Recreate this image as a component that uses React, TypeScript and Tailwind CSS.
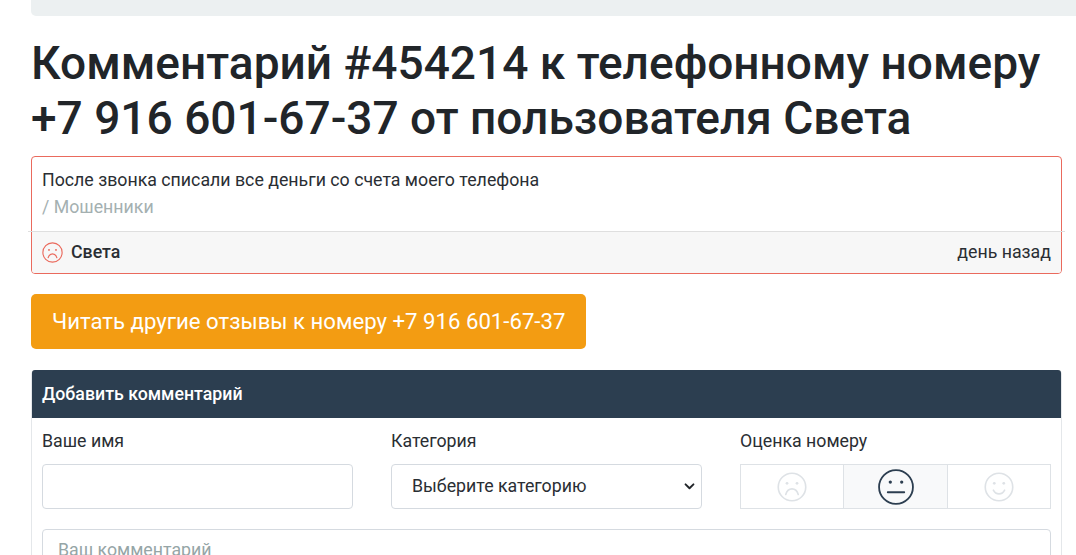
const Frown = ({ className }: { className: string }) => (
  <svg viewBox="0 0 24 24" fill="none" stroke="currentColor" strokeWidth="1.3" strokeLinecap="round" className={className}>
    <circle cx="12" cy="12" r="11" />
    <circle cx="8" cy="9" r="1.1" fill="currentColor" stroke="none" />
    <circle cx="16" cy="9" r="1.1" fill="currentColor" stroke="none" />
    <path d="M7 18c.8-2.800 2.800-4.500 5-4.500s4.200 1.700 5 4.500" />
  </svg>
);

const Meh = ({ className }: { className: string }) => (
  <svg viewBox="0 0 24 24" fill="none" stroke="currentColor" strokeWidth="1.200" strokeLinecap="round" className={className}>
    <circle cx="12" cy="12" r="11.300" />
    <circle cx="8.200" cy="8.700" r="1.100" fill="currentColor" stroke="none" />
    <circle cx="15.800" cy="8.700" r="1.100" fill="currentColor" stroke="none" />
    <path d="M6.500 15.500h11" />
  </svg>
);

const Smile = ({ className }: { className: string }) => (
  <svg viewBox="0 0 24 24" fill="none" stroke="currentColor" strokeWidth="1.300" strokeLinecap="round" className={className}>
    <circle cx="12" cy="12" r="11" />
    <circle cx="8.200" cy="9" r="1.100" fill="currentColor" stroke="none" />
    <circle cx="15.800" cy="9" r="1.100" fill="currentColor" stroke="none" />
    <path d="M7.500 14.500c1 2 2.700 3 4.500 3s3.500-1 4.500-3" />
  </svg>
);

export default function App() {
  return (
    <div className="h-[555px] overflow-hidden bg-white pl-[31px] pr-[14px] font-['Roboto',sans-serif] text-[17.75px] text-[#2a2e33]">
      <div className="-mr-[14px] h-[16px] rounded-bl-[5px] bg-[#ecf0f1]" />

      <h1 className="mt-[20px] text-[46.05px] leading-[55px] font-medium text-[#212529]">
        Комментарий #454214 к телефонному номеру +7 916 601-67-37 от пользователя Света
      </h1>

      <div className="mt-[10px] rounded-[4px] border border-[#ea6a5d] leading-[24px]">
        <div className="px-[10px] pt-[11px] pb-[12px]">
          <p className="mb-[3px]">После звонка списали все деньги со счета моего телефона</p>
          <p className="text-[#a4b0b1]">/ Мошенники</p>
        </div>
        <div className="-mx-[4px] border-t border-[#dfdfdf]" />
        <div className="flex h-[41px] items-center justify-between rounded-b-[3px] bg-[#f7f7f7] px-[10px] pb-px">
          <div className="flex items-center gap-[8px]">
            <Frown className="h-[21px] w-[21px] text-[#ea6a5d]" />
            <span className="font-medium">Света</span>
          </div>
          <span>день назад</span>
        </div>
      </div>

      <button className="mt-[20px] block h-[55px] rounded-[5px] bg-[#f39c12] px-[21px] text-[22.18px] text-white">
        Читать другие отзывы к номеру +7 916 601-67-37
      </button>

      <div className="mt-[21px] rounded-[4px] border border-[#e4e7ea]">
        <div className="-mt-px flex h-[48px] items-center rounded-t-[3px] bg-[#2c3e50] px-[10px] font-medium text-white">
          Добавить комментарий
        </div>
        <div className="px-[10px] pt-[11px]">
          <div className="grid grid-cols-[311px_311px_311px] gap-x-[38px]">
            <div>
              <label className="block leading-[24px]">Ваше имя</label>
              <input className="mt-[11px] block h-[45px] w-full rounded-[4px] border border-[#d5dae0] bg-white" />
            </div>
            <div>
              <label className="block leading-[24px]">Категория</label>
              <div className="relative mt-[11px]">
                <select className="block h-[45px] w-full appearance-none rounded-[4px] border border-[#d5dae0] bg-white pl-[20px] pr-[24px]">
                  <option>Выберите категорию</option>
                </select>
                <svg
                  viewBox="0 0 12 8"
                  fill="none"
                  stroke="currentColor"
                  strokeWidth="2.200"
                  strokeLinecap="round"
                  strokeLinejoin="round"
                  className="pointer-events-none absolute top-[19px] right-[7px] h-[7px] w-[11px] text-[#212529]"
                >
                  <path d="M1.500 1.500 6 6l4.500-4.500" />
                </svg>
              </div>
            </div>
            <div>
              <label className="block leading-[24px]">Оценка номеру</label>
              <div className="mt-[11px] grid h-[45px] grid-cols-[102px_105px_1fr] border border-[#dee2e6]">
                <div className="flex items-center justify-center">
                  <Frown className="h-[30px] w-[30px] text-[#dee2e6]" />
                </div>
                <div className="flex items-center justify-center border-x border-[#dee2e6] bg-[#f8f9fa]">
                  <Meh className="h-[36px] w-[36px] text-[#2c3e50]" />
                </div>
                <div className="flex items-center justify-center">
                  <Smile className="h-[30px] w-[30px] text-[#dee2e6]" />
                </div>
              </div>
            </div>
          </div>
          <textarea
            placeholder="Ваш комментарий"
            className="mt-[20px] block h-[100px] w-full resize-none rounded-[4px] border border-[#d5dae0] px-[15px] py-[7px] placeholder:text-[#95a5a6]"
          />
        </div>
      </div>
    </div>
  );
}
